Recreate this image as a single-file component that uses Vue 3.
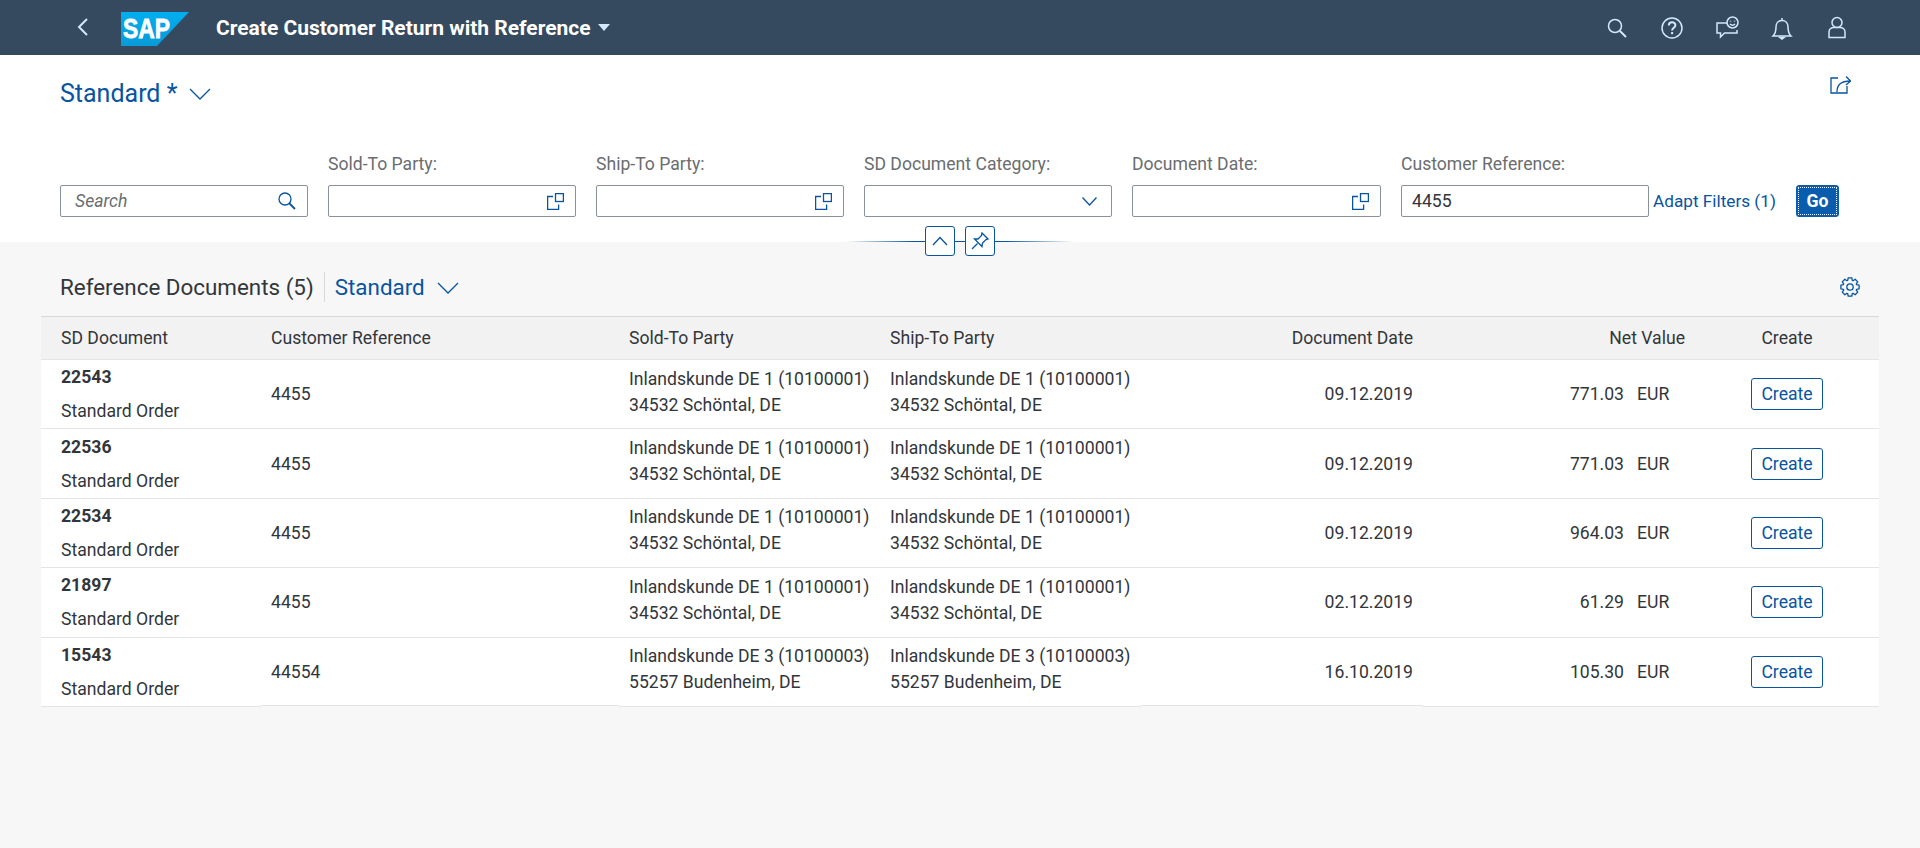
<script setup>
const filters = [
  { label: 'Sold-To Party:', value: '', icon: 'help' },
  { label: 'Ship-To Party:', value: '', icon: 'help' },
  { label: 'SD Document Category:', value: '', icon: 'down' },
  { label: 'Document Date:', value: '', icon: 'help' },
  { label: 'Customer Reference:', value: '4455', icon: '' },
];

const de1 = ['Inlandskunde DE 1 (10100001)', '34532 Schöntal, DE'];
const de3 = ['Inlandskunde DE 3 (10100003)', '55257 Budenheim, DE'];

const rows = [
  { doc: '22543', ref: '4455', party: de1, date: '09.12.2019', net: '771.03' },
  { doc: '22536', ref: '4455', party: de1, date: '09.12.2019', net: '771.03' },
  { doc: '22534', ref: '4455', party: de1, date: '09.12.2019', net: '964.03' },
  { doc: '21897', ref: '4455', party: de1, date: '02.12.2019', net: '61.29' },
  { doc: '15543', ref: '44554', party: de3, date: '16.10.2019', net: '105.30' },
];

// eight rounded teeth round the centre of a 20x20 box
function gearPath() {
  const pts = [];
  for (let i = 0; i < 8; i++) {
    const a = (i * Math.PI) / 4 - Math.PI / 2;
    [[-0.33, 7], [-0.2, 9.3], [0.2, 9.3], [0.33, 7]].forEach(([d, r]) => {
      pts.push(`${(10 + r * Math.cos(a + d)).toFixed(2)} ${(10 + r * Math.sin(a + d)).toFixed(2)}`);
    });
  }
  return `M${pts.join('L')}Z`;
}
const gear = gearPath();
</script>

<template>
  <div class="page">
    <header class="shell">
      <svg class="back" width="14" height="20" viewBox="0 0 14 20"><path d="M11 2 3 10l8 8" /></svg>
      <svg class="logo" width="68" height="34" viewBox="0 0 68 34">
        <defs>
          <linearGradient id="sapBlue" x1="0" y1="0" x2="0" y2="1">
            <stop offset="0" stop-color="#00aeef" />
            <stop offset="1" stop-color="#0a9ad8" />
          </linearGradient>
        </defs>
        <polygon points="0,0 68,0 36,34 0,34" fill="url(#sapBlue)" />
        <text x="2" y="26" class="logo-text" textLength="47" lengthAdjust="spacingAndGlyphs">SAP</text>
      </svg>
      <span class="shell-title">Create Customer Return with Reference</span>
      <span class="shell-caret"></span>
      <div class="shell-icons">
        <svg width="24" height="24" viewBox="0 0 24 24"><circle cx="10" cy="10" r="6.5" /><path d="m15 15 6 6" stroke-width="2" /></svg>
        <svg width="24" height="24" viewBox="0 0 24 24">
          <circle cx="12" cy="12" r="10" />
          <path d="M8.8 9.5c0-4.3 6.6-4.3 6.6-.3 0 2.600-3.300 2.600-3.300 5.300" stroke-width="2" />
          <path d="M12.100 16v2.200" stroke-width="2" />
        </svg>
        <svg width="24" height="24" viewBox="0 0 24 24">
          <path d="M12 7H2v10h3.500v4l4-4H22v-3" />
          <circle cx="17.500" cy="6.500" r="5.500" />
          <path d="M15 8c1.500 1.500 3.500 1.500 5 0M15.500 4.800v.8M19.500 4.800v.8" />
        </svg>
        <svg width="24" height="24" viewBox="0 0 24 24">
          <path d="M3 20c2.500-2.500 3-4.500 3-9 0-3.800 2.500-6.500 6-6.500s6 2.700 6 6.500c0 4.500.5 6.500 3 9Z" />
          <path d="M12 2v2.500" />
          <path d="M10 21.500h4L12 23Z" fill="#d1e8ff" />
        </svg>
        <svg width="24" height="24" viewBox="0 0 24 24">
          <circle cx="12" cy="6.500" r="5" />
          <path d="M4 21.500V16c0-3 2.500-4.500 5-4.500h6c2.500 0 5 1.500 5 4.500v5.500Z" />
        </svg>
      </div>
    </header>

    <section class="filterbar">
      <div class="variant-row">
        <span class="variant">Standard *</span>
        <svg class="chev" width="22" height="12" viewBox="0 0 22 12"><path d="m1 1 10 10L21 1" /></svg>
        <svg class="share" width="21" height="19" viewBox="0 0 21 19">
          <path d="M8 3H1v15h16v-7" />
          <path d="M7 17c0-7 4-11 13-11M16 1.500 20.500 6 16 10" />
        </svg>
      </div>

      <div class="filters">
        <div class="field">
          <div class="input">
            <span class="placeholder">Search</span>
            <svg width="18" height="18" viewBox="0 0 18 18"><circle cx="7" cy="7" r="6" /><path d="m11 11 6 6" stroke-width="1.800" /></svg>
          </div>
        </div>
        <div v-for="f in filters" :key="f.label" class="field">
          <label>{{ f.label }}</label>
          <div class="input">
            <span class="value">{{ f.value }}</span>
            <svg v-if="f.icon === 'help'" width="17" height="17" viewBox="0 0 17 17">
              <path d="M6 3.500H.6v13h11v-5" />
              <rect x="8.500" y=".6" width="7.900" height="7.900" />
            </svg>
            <svg v-if="f.icon === 'down'" class="down" width="15" height="9" viewBox="0 0 15 9"><path d="m.5.5 7 7.500 7-7.500" /></svg>
          </div>
        </div>
        <a class="adapt">Adapt Filters (1)</a>
        <button class="go">Go</button>
      </div>

      <div class="collapse">
        <span class="collapse-btn">
          <svg width="18" height="12" viewBox="0 0 18 12"><path d="m2 10 7-7.500 7 7.500" /></svg>
        </span>
        <span class="collapse-btn">
          <svg width="20" height="20" viewBox="0 0 20 20">
            <path d="M12 2 18 8l-2 .5-3.500 3.500-.5 3.500-7.500-7.500L8 8l3.500-3.500Z" />
            <path d="m7.500 12.500L2 18" />
          </svg>
        </span>
      </div>
    </section>

    <main class="content">
      <div class="table-bar">
        <h2>Reference Documents (5)</h2>
        <span class="bar-sep"></span>
        <span class="table-variant">Standard</span>
        <svg class="chev" width="22" height="12" viewBox="0 0 22 12"><path d="m1 1 10 10L21 1" /></svg>
        <svg class="gear" width="20" height="20" viewBox="0 0 20 20">
          <circle cx="10" cy="10" r="3.200" />
          <path :d="gear" />
        </svg>
      </div>

      <table class="docs">
        <colgroup>
          <col style="width: 220px" />
          <col style="width: 358px" />
          <col style="width: 261px" />
          <col style="width: 261px" />
          <col style="width: 282px" />
          <col style="width: 272px" />
          <col style="width: 184px" />
        </colgroup>
        <thead>
          <tr>
            <th>SD Document</th>
            <th>Customer Reference</th>
            <th>Sold-To Party</th>
            <th>Ship-To Party</th>
            <th class="right">Document Date</th>
            <th class="right">Net Value</th>
            <th class="center">Create</th>
          </tr>
        </thead>
        <tbody>
          <tr v-for="r in rows" :key="r.doc">
            <td class="doc">
              <strong>{{ r.doc }}</strong>
              <span>Standard Order</span>
            </td>
            <td>{{ r.ref }}</td>
            <td class="party">
              <div>{{ r.party[0] }}</div>
              <div>{{ r.party[1] }}</div>
            </td>
            <td class="party">
              <div>{{ r.party[0] }}</div>
              <div>{{ r.party[1] }}</div>
            </td>
            <td class="right">{{ r.date }}</td>
            <td class="net">
              <span>{{ r.net }}</span>
              <span class="cur">EUR</span>
            </td>
            <td class="center"><button class="create">Create</button></td>
          </tr>
        </tbody>
      </table>
    </main>
  </div>
</template>

<style>
html, body { margin: 0; background: #f7f7f7; }
</style>

<style scoped>
.page {
  height: 848px;
  overflow: hidden;
  background: #f7f7f7;
  font-family: Roboto, "Liberation Sans", sans-serif;
  font-size: 17.6px;
  color: #32363a;
}
svg { fill: none; stroke: #0854a0; stroke-width: 1.3; flex: none; }

.shell {
  height: 55px;
  background: #354a5f;
  display: flex;
  align-items: center;
  padding-left: 76px;
}
.back { stroke: #d1e8ff; stroke-width: 2; margin-top: -1px; }
.logo { margin-left: 31px; margin-top: 3px; stroke: none; }
.logo-text {
  font-family: "Liberation Sans", sans-serif;
  font-size: 28px;
  font-weight: 700;
  fill: #fff;
  stroke: #fff;
  stroke-width: 0.8;
}
.shell-title { margin-left: 27px; color: #fff; font-size: 21px; font-weight: 700; white-space: nowrap; }
.shell-caret {
  margin-left: 7px;
  border-left: 6px solid transparent;
  border-right: 6px solid transparent;
  border-top: 7px solid #d1e8ff;
}
.shell-icons { margin-left: auto; margin-right: 71px; display: flex; gap: 31px; }
.shell-icons svg { stroke: #d1e8ff; stroke-width: 1.5; }

.filterbar { background: #fff; height: 187px; padding: 0 60px; position: relative; }
.variant-row { height: 75px; display: flex; align-items: center; position: relative; }
.variant { color: #0854a0; font-size: 25px; margin-top: 2px; }
.chev { margin-left: 12px; margin-top: 2px; }
.share { margin-left: auto; margin-right: 9px; margin-top: -16px; }

.filters { display: flex; align-items: flex-end; gap: 20px; padding-top: 25px; }
.field { width: 248px; }
.field:nth-child(5) { width: 249px; }
.field label { display: block; color: #6a6d70; line-height: 19px; margin-bottom: 11px; white-space: nowrap; }
.input {
  box-sizing: border-box;
  height: 32px;
  background: #fff;
  border: 1px solid #89919a;
  border-radius: 2px;
  display: flex;
  align-items: center;
  justify-content: space-between;
  padding: 0 11px 0 14px;
}
.value { margin-left: -4px; }
.down { margin-right: 3px; }
.placeholder { color: #6a6d70; font-style: italic; }
.adapt { margin-left: -16px; height: 32px; line-height: 32px; font-size: 17.2px; color: #0854a0; white-space: nowrap; }
.go {
  margin-left: 0;
  width: 43px;
  height: 32px;
  padding: 0;
  background: #0a5cad;
  border: 1px solid #0a5cad;
  border-radius: 3px;
  outline: 1px dotted #fff;
  outline-offset: -3px;
  color: #fff;
  font: 700 17.6px Roboto, "Liberation Sans", sans-serif;
}

.collapse {
  position: absolute;
  left: 845px;
  width: 229px;
  top: 171px;
  height: 30px;
  display: flex;
  justify-content: center;
  gap: 10px;
}
.collapse::before {
  content: '';
  position: absolute;
  left: 0;
  right: 0;
  top: 15px;
  height: 1px;
  background: linear-gradient(90deg, rgba(8, 84, 160, 0), #0854a0 30%, #0854a0 70%, rgba(8, 84, 160, 0));
}
.collapse-btn {
  position: relative;
  box-sizing: border-box;
  width: 30px;
  height: 30px;
  background: #fff;
  border: 1px solid #0854a0;
  border-radius: 3px;
  display: flex;
  align-items: center;
  justify-content: center;
}

.content { padding: 0 41px; }
.table-bar { box-sizing: border-box; height: 74px; display: flex; align-items: center; padding: 15px 0 0 19px; }
.table-bar h2 { margin: 0; font-size: 22.4px; font-weight: 400; white-space: nowrap; }
.bar-sep { width: 1px; height: 30px; background: #d9d9d9; margin: 0 10px; }
.table-variant { color: #0854a0; font-size: 22.4px; }
.gear { margin-left: auto; margin-right: 19px; stroke-linejoin: round; }

.docs { width: 1838px; table-layout: fixed; border-collapse: separate; border-spacing: 0; background: #fff; }
.docs th {
  height: 44px;
  box-sizing: border-box;
  padding: 0 10px;
  background: #f2f2f2;
  border-top: 1px solid #d9d9d9;
  border-bottom: 1px solid #e4e4e4;
  font-weight: 400;
  text-align: left;
}
.docs th:first-child, .docs td:first-child { padding-left: 20px; }
.docs td {
  height: 69.4px;
  box-sizing: border-box;
  padding: 0 10px;
  border-bottom: 1px solid #e4e4e4;
}
.docs th.right, .docs td.right { text-align: right; }
.docs th.center, .docs td.center { text-align: center; }
/* the last row's line sits a pixel higher under these two columns */
.docs tr:last-child td:nth-child(2), .docs tr:last-child td:nth-child(5) {
  border-bottom-color: #f7f7f7;
  box-shadow: inset 0 -1px #e4e4e4;
}
.doc strong { display: block; font-weight: 700; line-height: 22px; margin-bottom: 12px; }
.doc span { display: block; line-height: 22px; margin-top: 1px; }
.docs td.party { padding-bottom: 5px; }
.party div { line-height: 26px; white-space: nowrap; }
.net { text-align: right; }
.cur { display: inline-block; width: 48px; margin-left: 13px; text-align: left; }
.create {
  width: 72px;
  height: 32px;
  padding: 0;
  background: #fff;
  border: 1px solid #0854a0;
  border-radius: 3px;
  color: #0854a0;
  font: 17.6px Roboto, "Liberation Sans", sans-serif;
}
</style>
